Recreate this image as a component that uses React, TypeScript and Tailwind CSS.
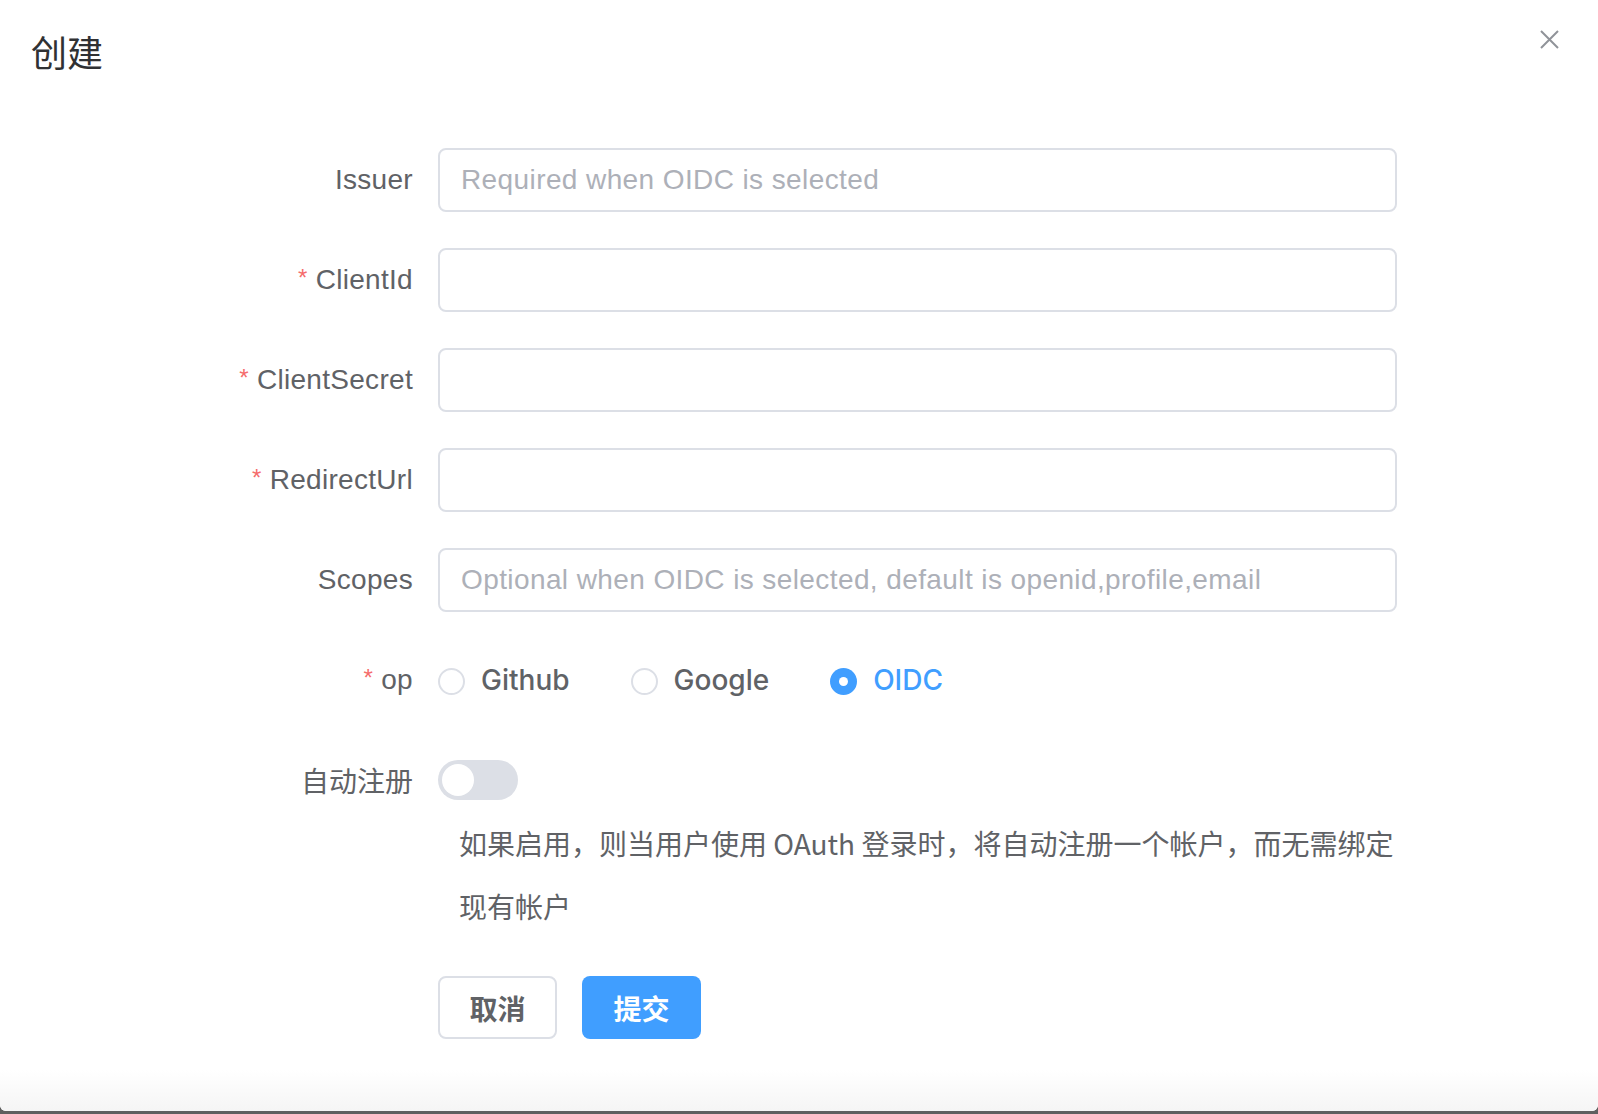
import React, { useState } from 'react';

const latin = 'font-["Liberation_Sans","Noto_Sans_CJK_SC",sans-serif]';

interface FieldProps {
    label: string;
    required?: boolean;
    placeholder?: string;
}

const Label: React.FC<{ text: string; required?: boolean }> = ({ text, required }) => (
    <div className={`w-[413px] shrink-0 text-right text-[28px] text-[#606266] tracking-[0.3px] ${latin}`}>
        {required && <span className="text-[#f56c6c] mr-[8px] text-[24px] relative top-[-3px]">*</span>}
        {text}
    </div>
);

const Field: React.FC<FieldProps> = ({ label, required, placeholder }) => (
    <div className="flex items-center h-[64px] mb-[36px]">
        <Label text={label} required={required} />
        <input
            placeholder={placeholder}
            className={`ml-[25px] w-[959px] h-[64px] rounded-[8px] border-2 border-[#dcdfe6] px-[21px] text-[28px] text-[#606266] tracking-[0.4px] outline-none placeholder:text-[#adb0b8] ${latin}`}
        />
    </div>
);

const Radio: React.FC<{ label: string; checked?: boolean; onClick: () => void }> = ({ label, checked, onClick }) => (
    <button onClick={onClick} className="flex items-center mr-[61px]">
        {checked ? (
            <span className="w-[27px] h-[27px] rounded-full bg-[#409eff] flex items-center justify-center mt-[3px]">
                <span className="w-[9px] h-[9px] rounded-full bg-white" />
            </span>
        ) : (
            <span className="w-[27px] h-[27px] rounded-full border-2 border-[#dcdfe6] bg-white mt-[3px]" />
        )}
        <span className={`ml-[16px] text-[28px] font-medium font-["Inter",sans-serif] ${checked ? 'text-[#409eff]' : 'text-[#606266]'}`}>
            {label}
        </span>
    </button>
);

export default function App() {
    const [op, setOp] = useState('OIDC');
    const [autoSignup, setAutoSignup] = useState(false);

    return (
        <div className="w-full h-[1114px] bg-[#5f5f5f]">
            <div className={`h-[1111px] bg-white rounded-b-[6px] flex flex-col overflow-hidden ${latin}`}>
                {/* Header */}
                <div className="flex items-start justify-between pt-[28px] pl-[31px] pr-[39px]">
                    <h2 className='text-[36px] leading-[46px] text-[#303133] font-["Noto_Sans_CJK_SC",sans-serif]'>创建</h2>
                    <button className="mt-[2px] w-[19px] h-[19px]">
                        <svg width="19" height="19" viewBox="0 0 19 19">
                            <path d="M1 1L18 18M18 1L1 18" stroke="#909399" strokeWidth="2" />
                        </svg>
                    </button>
                </div>

                {/* Form */}
                <div className="flex-1 pt-[74px]">
                    <Field label="Issuer" placeholder="Required when OIDC is selected" />
                    <Field label="ClientId" required />
                    <Field label="ClientSecret" required />
                    <Field label="RedirectUrl" required />
                    <Field label="Scopes" placeholder="Optional when OIDC is selected, default is openid,profile,email" />

                    <div className="flex items-center h-[64px] mb-[36px]">
                        <Label text="op" required />
                        <div className="ml-[25px] flex items-center">
                            {['Github', 'Google', 'OIDC'].map(o => (
                                <Radio key={o} label={o} checked={op === o} onClick={() => setOp(o)} />
                            ))}
                        </div>
                    </div>

                    <div className="flex items-center h-[64px]">
                        <div className='w-[413px] shrink-0 text-right text-[28px] text-[#606266] font-["Noto_Sans_CJK_SC",sans-serif]'>自动注册</div>
                        <button
                            onClick={() => setAutoSignup(!autoSignup)}
                            className={`ml-[25px] w-[80px] h-[40px] rounded-full p-[4px] flex items-center ${autoSignup ? 'bg-[#409eff] justify-end' : 'bg-[#dcdfe6] justify-start'}`}
                        >
                            <span className="w-[32px] h-[32px] rounded-full bg-white" />
                        </button>
                    </div>

                    <div className='pl-[459px] text-[28px] leading-[63px] text-[#606266] font-["Noto_Sans_CJK_SC",sans-serif]'>
                        <div className="whitespace-nowrap">如果启用，则当用户使用 OAuth 登录时，将自动注册一个帐户，而无需绑定</div>
                        <div>现有帐户</div>
                    </div>

                    <div className='flex pl-[438px] mt-[38px] gap-[25px] font-["Noto_Sans_CJK_SC",sans-serif]'>
                        <button className="w-[119px] h-[63px] rounded-[8px] border-2 border-[#dcdfe6] bg-white text-[28px] font-bold text-[#606266]">
                            取消
                        </button>
                        <button className="w-[119px] h-[63px] rounded-[8px] bg-[#409eff] text-[28px] font-bold text-white">
                            提交
                        </button>
                    </div>
                </div>

                <div className="h-[41px] bg-linear-to-b from-white to-[#f5f5f5]" />
            </div>
        </div>
    );
}
